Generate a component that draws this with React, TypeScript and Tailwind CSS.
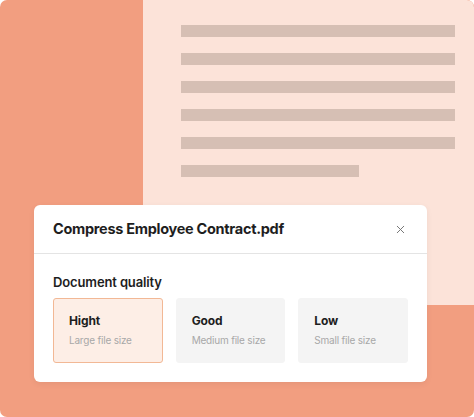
import { X } from 'lucide-react';

const lines = [0, 1, 2, 3, 4];

const options = [
  { title: 'Hight', sub: 'Large file size', active: true },
  { title: 'Good', sub: 'Medium file size', active: false },
  { title: 'Low', sub: 'Small file size', active: false },
];

export default function App() {
  return (
    <div className="h-[417px] w-[474px] overflow-hidden rounded-[7px] bg-[#F29E80] font-['Inter',sans-serif]">
      <div className="ml-[143px] h-[305px] rounded-tr-[7px] bg-[#FCE3D9] pl-[38px] pr-[19px] pt-[25px]">
        <div className="flex flex-col gap-4">
          {lines.map((i) => (
            <div key={i} className="h-3 w-full bg-[#D6BFB4]" />
          ))}
          <div className="h-3 w-[178px] bg-[#D6BFB4]" />
        </div>
      </div>

      <div className="relative ml-[34px] -mt-[100px] w-[393px] rounded-[6px] bg-white shadow-[0_2px_6px_rgba(0,0,0,0.06)]">
        <div className="flex h-[49px] items-center justify-between border-b border-[#E4E4E4] pl-[19px] pr-[20px]">
          <h2 className="text-[14.5px] font-bold tracking-[-0.02em] text-[#1E1E1E]">Compress Employee Contract.pdf</h2>
          <X className="h-[13px] w-[13px] text-[#707070]" strokeWidth={1.75} />
        </div>
        <div className="px-[19px] pb-[19px] pt-[20px]">
          <p className="text-[13px] font-semibold leading-[16px] tracking-[-0.01em] text-[#1E1E1E]">Document quality</p>
          <div className="mt-[8px] grid grid-cols-3 gap-[13px]">
            {options.map((o) => (
              <div
                key={o.title}
                className={
                  o.active
                    ? 'h-[65px] rounded-[3px] border border-[#F2B895] bg-[#FDEEE6] pl-[15px] pt-[15px]'
                    : 'h-[65px] rounded-[3px] border border-[#F4F4F4] bg-[#F4F4F4] pl-[15px] pt-[15px]'
                }
              >
                <p className="text-[12px] font-bold leading-[14px] tracking-[-0.01em] text-[#1E1E1E]">{o.title}</p>
                <p className="mt-[6px] text-[10px] leading-[12px] tracking-[-0.02em] text-[#A8A8A8]">{o.sub}</p>
              </div>
            ))}
          </div>
        </div>
      </div>
    </div>
  );
}
